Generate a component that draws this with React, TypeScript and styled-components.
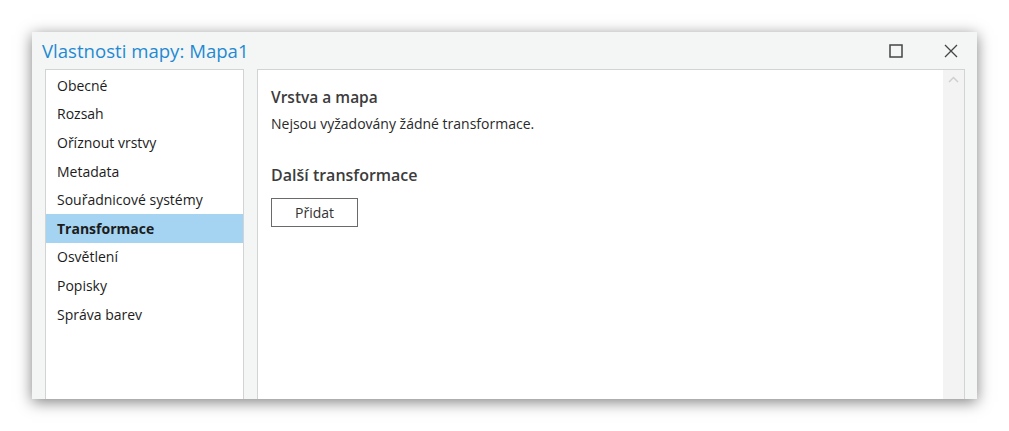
import React from 'react'
import styled, {createGlobalStyle} from 'styled-components'

const GlobalStyle = createGlobalStyle`
    html, body {
        margin:0;
        background:#ffffff;
    }
    body {
        padding:32px;
        font-family:"Open Sans", "Noto Sans", sans-serif;
        color:#1e1e1e;
    }
`

const pages = [
    'Obecné',
    'Rozsah',
    'Oříznout vrstvy',
    'Metadata',
    'Souřadnicové systémy',
    'Transformace',
    'Osvětlení',
    'Popisky',
    'Správa barev',
]

const Window = styled.div`
    width:945px;
    height:367px;
    background:#f4f6f6;
    box-shadow:0 3px 14px rgba(0,0,0,0.5);
    display:flex;
    flex-direction:column;
    overflow:hidden;
`

const TitleBar = styled.div`
    height:37px;
    display:flex;
    align-items:center;
    padding-left:10px;
`

const Title = styled.h1`
    flex:1;
    margin:0;
    font-size:18.6px;
    font-weight:400;
    color:#1f8ad2;
`

const Controls = styled.div`
    display:flex;
    gap:41px;
    padding-right:19px;
    align-items:center;
`

const ControlButton = styled.button`
    width:14px;
    height:14px;
    padding:0;
    border:none;
    background:none;
    display:flex;
    color:#444;
`

const Body = styled.div`
    flex:1;
    display:flex;
    gap:13px;
    padding:0 12px 0 13px;
`

const NavList = styled.ul`
    width:199px;
    box-sizing:border-box;
    margin:0;
    padding:1px 0 0;
    list-style:none;
    background:#fff;
    border:1px solid #d2d4d4;
    border-bottom:none;
`

const NavItem = styled.li<{active?: boolean}>`
    height:28.6px;
    display:flex;
    align-items:center;
    padding-left:11px;
    font-size:14px;
    font-weight:${p => p.active ? 700 : 400};
    background:${p => p.active ? '#a5d4f3' : 'transparent'};
    color:#1c1c1c;
`

const Content = styled.div`
    flex:1;
    display:flex;
    background:#fff;
    border:1px solid #d2d4d4;
    border-bottom:none;
`

const Pane = styled.div`
    flex:1;
    padding:16px 13px;
`

const Heading = styled.h2<{size: number}>`
    margin:0;
    font-size:${p => p.size}px;
    font-weight:600;
    color:#3c3c3c;
`

const Note = styled.p`
    margin:6px 0 0;
    font-size:14px;
    color:#2a2a2a;
`

const Section = styled.div`
    margin-top:31px;
    display:flex;
    flex-direction:column;
    align-items:flex-start;
    gap:12px;
`

const Button = styled.button`
    width:87px;
    height:29px;
    box-sizing:border-box;
    border:1px solid #6a6a6a;
    background:#fff;
    font-family:inherit;
    font-size:14px;
    color:#333;
`

const ScrollBar = styled.div`
    width:21px;
    background:#f3f3f3;
    display:flex;
    justify-content:center;
    padding-top:6px;
    color:#cfcfcf;
`

export default function App() {
    return (
        <>
            <GlobalStyle/>
            <Window>
                <TitleBar>
                    <Title>Vlastnosti mapy: Mapa1</Title>
                    <Controls>
                        <ControlButton aria-label="Maximalizovat">
                            <svg width="14" height="14" viewBox="0 0 14 14">
                                <rect x="1" y="1" width="12" height="12" fill="none" stroke="currentColor" strokeWidth="1.5"/>
                            </svg>
                        </ControlButton>
                        <ControlButton aria-label="Zavřít">
                            <svg width="14" height="14" viewBox="0 0 14 14">
                                <path d="M1 1 L13 13 M13 1 L1 13" stroke="currentColor" strokeWidth="1.3"/>
                            </svg>
                        </ControlButton>
                    </Controls>
                </TitleBar>
                <Body>
                    <NavList>
                        {pages.map(p => (
                            <NavItem key={p} active={p === 'Transformace'}>{p}</NavItem>
                        ))}
                    </NavList>
                    <Content>
                        <Pane>
                            <Heading size={15.5}>Vrstva a mapa</Heading>
                            <Note>Nejsou vyžadovány žádné transformace.</Note>
                            <Section>
                                <Heading size={16}>Další transformace</Heading>
                                <Button>Přidat</Button>
                            </Section>
                        </Pane>
                        <ScrollBar>
                            <svg width="11" height="7" viewBox="0 0 11 7">
                                <path d="M1 6 L5.5 1.5 L10 6" fill="none" stroke="currentColor" strokeWidth="1.5"/>
                            </svg>
                        </ScrollBar>
                    </Content>
                </Body>
            </Window>
        </>
    )
}
